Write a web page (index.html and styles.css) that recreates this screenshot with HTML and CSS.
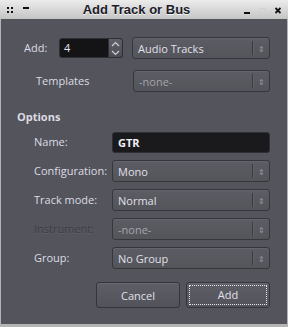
FILE: index.html
```html
<!DOCTYPE html>
<html lang="en">
<head>
  <meta charset="UTF-8">
  <title>Add Track or Bus</title>
  <link rel="stylesheet" href="styles.css">
</head>
<body>
  <div class="window">
    <div class="titlebar">
      <div class="tb-side tb-left">
        <svg class="tb-icon" width="22" height="12" viewBox="0 0 22 12">
          <rect x="0" y="3" width="2" height="2" fill="#111"/>
          <rect x="4" y="3" width="2" height="2" fill="#111"/>
          <rect x="0" y="7" width="2" height="2" fill="#111"/>
          <rect x="4" y="7" width="2" height="2" fill="#111"/>
          <rect x="16" y="3" width="6" height="2" fill="#111"/>
        </svg>
      </div>
      <div class="title">Add Track or Bus</div>
      <div class="tb-side tb-right">
        <svg class="tb-icon" width="37" height="12" viewBox="0 0 37 12">
          <rect x="0" y="8" width="6" height="2" fill="#111"/>
          <rect x="16.5" y="4.5" width="5" height="5" fill="none" stroke="#d0d0d0"/>
          <path d="M31.5 4 L36.5 9 M36.5 4 L31.5 9" stroke="#111" stroke-width="1.8"/>
        </svg>
      </div>
    </div>

    <div class="content">
      <div class="row-add">
        <span class="label add-label">Add:</span>
        <div class="spin">
          <span class="spin-value">4</span>
          <span class="spin-btns">
            <svg width="9" height="6" viewBox="0 0 9 6"><path d="M1 5 L4.5 1.5 L8 5" stroke="#cfd0d6" fill="none" stroke-width="1.2"/></svg>
            <svg width="9" height="6" viewBox="0 0 9 6"><path d="M1 1 L4.5 4.5 L8 1" stroke="#cfd0d6" fill="none" stroke-width="1.2"/></svg>
          </span>
        </div>
        <div class="combo">
          <span class="combo-text">Audio Tracks</span>
          <span class="combo-arrow"><span class="sep"></span><span class="updown">⇕</span></span>
        </div>
      </div>

      <div class="row-templates">
        <span class="label templates-label">Templates</span>
        <div class="combo disabled">
          <span class="combo-text">-none-</span>
          <span class="combo-arrow"><span class="sep"></span><span class="updown">⇕</span></span>
        </div>
      </div>

      <div class="options-title">Options</div>

      <div class="options">
        <span class="label">Name:</span>
        <div class="entry">GTR</div>

        <span class="label">Configuration:</span>
        <div class="combo">
          <span class="combo-text">Mono</span>
          <span class="combo-arrow"><span class="sep"></span><span class="updown">⇕</span></span>
        </div>

        <span class="label">Track mode:</span>
        <div class="combo">
          <span class="combo-text">Normal</span>
          <span class="combo-arrow"><span class="sep"></span><span class="updown">⇕</span></span>
        </div>

        <span class="label label-off">Instrument:</span>
        <div class="combo disabled">
          <span class="combo-text">-none-</span>
          <span class="combo-arrow"><span class="sep"></span><span class="updown">⇕</span></span>
        </div>

        <span class="label">Group:</span>
        <div class="combo">
          <span class="combo-text">No Group</span>
          <span class="combo-arrow"><span class="sep"></span><span class="updown">⇕</span></span>
        </div>
      </div>

      <div class="buttons">
        <div class="btn">Cancel</div>
        <div class="btn btn-focus"><span>Add</span></div>
      </div>
    </div>
  </div>
</body>
</html>
```

FILE: styles.css
```css
/* dialog */
body {
  margin: 0;
  padding: 0;
  background-color: #54545c;
  font-family: "Open Sans", "Noto Sans", sans-serif;
  font-size: 11px;
  color: #dcdce4;
}

.window {
  width: 288px;
  height: 327px;
  display: flex;
  flex-direction: column;
  box-sizing: border-box;
}

.titlebar {
  height: 19px;
  background: linear-gradient(#ececec, #c4c4c4);
  display: flex;
  align-items: center;
  padding: 0 7px 0 7px;
  flex-shrink: 0;
}

.tb-side {
  display: flex;
  align-items: center;
  flex-shrink: 0;
}

.tb-icon {
  display: block;
}

.title {
  flex: 1;
  font-family: "Liberation Sans", Arial, sans-serif;
  font-weight: bold;
  font-size: 13px;
  color: #1c1c2a;
  text-shadow: 0 1px 0 #f4f4f4;
  text-align: center;
  line-height: 19px;
}

.content {
  flex: 1;
  background-color: #54545c;
  border-left: 1px solid #b4b4b4;
  border-right: 1px solid #b4b4b4;
  border-bottom: 3px solid #b4b4b4;
  padding: 18px 17px 0 16px;
  display: flex;
  flex-direction: column;
}

.label {
  line-height: 22px;
  white-space: nowrap;
}

.row-add {
  display: flex;
  align-items: center;
  height: 22px;
}

.add-label {
  margin-left: 7px;
  width: 35px;
}

.spin {
  width: 64px;
  height: 20px;
  display: flex;
  border: 1px solid #2e2e34;
  border-radius: 3px;
  box-sizing: border-box;
  background-color: #141416;
  overflow: hidden;
}

.spin-value {
  flex: 1;
  padding-left: 4px;
  line-height: 18px;
  color: #e4e4f0;
}

.spin-btns {
  width: 13px;
  display: flex;
  flex-direction: column;
  align-items: center;
  justify-content: space-around;
  background: linear-gradient(#60606a, #4c4c54);
  border-left: 1px solid #2e2e34;
}

.row-add .combo {
  margin-left: 9px;
  flex: 1;
}

.row-templates {
  display: flex;
  align-items: center;
  margin-top: 11px;
}

.templates-label {
  margin-left: 19px;
  width: 97px;
}

.row-templates .combo {
  flex: 1;
}

.combo {
  height: 22px;
  box-sizing: border-box;
  border: 1px solid #36363c;
  border-radius: 3px;
  background: linear-gradient(#5c5c64, #54545b);
  box-shadow: inset 0 1px 0 #64646c;
  display: flex;
  align-items: center;
}

.combo-text {
  flex: 1;
  padding-left: 5px;
  color: #e0e0ea;
}

.combo.disabled .combo-text {
  color: #a4a4aa;
}

.combo-arrow {
  display: flex;
  align-items: center;
  width: 17px;
  height: 100%;
}

.sep {
  width: 1px;
  height: 14px;
  background-color: #3a3a40;
  box-shadow: 1px 0 0 #606068;
}

.updown {
  flex: 1;
  text-align: center;
  font-size: 8px;
  color: #9c9ca4;
}

.options-title {
  font-weight: bold;
  margin-top: 17px;
  line-height: 16px;
}

.options {
  display: grid;
  grid-template-columns: 78px 1fr;
  row-gap: 7px;
  margin-top: 6px;
  padding-left: 17px;
  align-items: center;
}

.options .combo {
  height: 22px;
}

.options .entry {
  height: 21px;
}

.entry {
  box-sizing: border-box;
  background-color: #1a1a1c;
  border: 1px solid #2e2e34;
  border-radius: 3px;
  font-weight: bold;
  padding-left: 5px;
  line-height: 19px;
  color: #f0f0f6;
}

.label-off {
  color: #3c3c42;
  text-shadow: 0 1px 0 #62626a;
}

.buttons {
  display: flex;
  justify-content: flex-end;
  gap: 6px;
  margin-top: 13px;
}

.btn {
  width: 84px;
  height: 26px;
  box-sizing: border-box;
  border: 1px solid #34343a;
  border-radius: 3px;
  background: linear-gradient(#5e5e66, #52525a);
  box-shadow: inset 0 1px 0 #68686f;
  color: #e0e0ea;
  display: flex;
  align-items: center;
  justify-content: center;
}

.btn-focus span {
  display: block;
  width: 76px;
  height: 18px;
  line-height: 18px;
  text-align: center;
  border: 1px dotted #e8e8e8;
}
```
